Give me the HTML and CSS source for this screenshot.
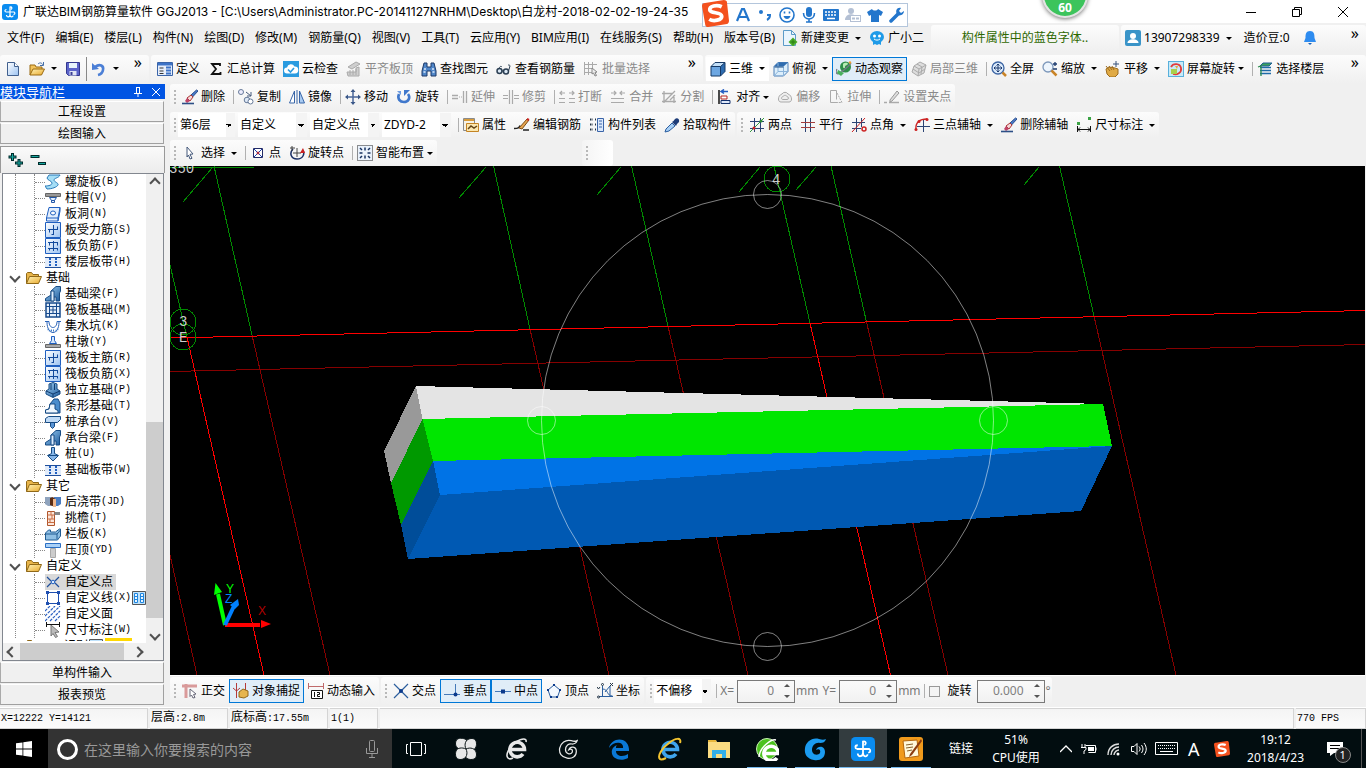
FILE: index.html
```html
<!DOCTYPE html>
<html lang="zh-CN">
<head>
<meta charset="UTF-8">
<meta name="viewport" content="width=device-width,initial-scale=1.0">
<title>广联达BIM钢筋算量软件 GGJ2013</title>
<link rel="stylesheet" href="styles.css">
</head>
<body>

<!-- icon library -->
<svg class="defs" aria-hidden="true">
  <linearGradient id="gBlue" x1="0" y1="0" x2="1" y2="1"><stop offset="0" stop-color="#fff"/><stop offset="1" stop-color="#9cc3f2"/></linearGradient>
  <linearGradient id="gFold" x1="0" y1="0" x2="1" y2="1"><stop offset="0" stop-color="#fff3b8"/><stop offset="1" stop-color="#e9a92c"/></linearGradient>
  <linearGradient id="gBeam" x1="0" y1="0" x2="1" y2="1"><stop offset="0" stop-color="#9fd0f4"/><stop offset="1" stop-color="#1c5a9c"/></linearGradient>
  <symbol id="app" viewBox="0 0 16 16"><rect width="16" height="16" rx="3" fill="#0a8cf0"/><path d="M8 2.500v8.500M4 8h8.500M8 3c2-.5 2.500 1.500 1 2.500M4 8c-1.500-.5-1.500-2.500.5-2.500M12 8c1 .5 1.500 2-.5 2.500M8 10.500c0 3-3.500 3-3.500.5M8 10.500c0 3 3 3 3 1" fill="none" stroke="#fff" stroke-width="1.200"/></symbol>
  <symbol id="new" viewBox="0 0 16 16"><path d="M2.500 1.500h7l4 4v9h-11z" fill="url(#gBlue)" stroke="#41608e"/><path d="M9.500 1.500v4h4" fill="#fff" stroke="#41608e"/></symbol>
  <symbol id="open" viewBox="0 0 16 16"><path d="M1 14V4h5l1 2h6v3" fill="#f2c35b" stroke="#9a6a12"/><path d="M1 14l3-6h11.500l-3 6z" fill="url(#gFold)" stroke="#9a6a12"/><path d="M9 3c2-2 4-1 5 1M14.500 1v3.500H11" fill="none" stroke="#466fa8"/></symbol>
  <symbol id="save" viewBox="0 0 16 16"><path d="M1.500 1.500h13v13h-11l-2-2z" fill="#5b63c9" stroke="#32378e"/><path d="M4 2h8v5H4z" fill="#e8f4fb"/><path d="M4.500 10h7v4.500h-7z" fill="#dfe4f4"/><path d="M5.500 11h2v3h-2z" fill="#3b3f96"/></symbol>
  <symbol id="undo" viewBox="0 0 16 16"><path d="M4 6c5-4 9-1 8 3-.5 3-3 4.500-5 5" fill="none" stroke="#4b7fd6" stroke-width="2.600"/><path d="M1 2v7l7-1z" fill="#4b7fd6"/></symbol>
  <symbol id="define" viewBox="0 0 16 16"><path d="M.5 1.500h15v13H.5z" fill="#e6eefb" stroke="#3a64a8"/><path d="M1 2h14v2.500H1z" fill="#3d73c7"/><path d="M2.500 7h4M2.500 10h4M2.500 12.500h4" stroke="#333"/><path d="M9 6.500h5M9 9.500h5M9 12.500h5" stroke="#3d73c7" stroke-width="2"/></symbol>
  <symbol id="sum" viewBox="0 0 16 16"><path d="M12 5V3H4l4 5-4 5h8.500v-2" fill="none" stroke="#111" stroke-width="1.800"/></symbol>
  <symbol id="cloud" viewBox="0 0 16 16"><rect width="16" height="16" fill="#2a9be0"/><path d="M4 12.500a3 3 0 0 1 0-6 4 4 0 0 1 7.500-1A3.500 3.500 0 0 1 12 12.500z" fill="#fff"/><path d="M5 8.500l2.500 2.500L11 7" fill="none" stroke="#2a9be0" stroke-width="1.600"/></symbol>
  <symbol id="slabtop" viewBox="0 0 16 16"><path d="M2 6l8-5 4 2-8 5zM1 11h9V7l3-1v9H2z" fill="#cfcfcf" stroke="#aaa"/><path d="M4 9v5M7 9v5M10 8v6" stroke="#aaa"/></symbol>
  <symbol id="find" viewBox="0 0 16 16"><path d="M3 2h3v4h4V2h3l2 8v5h-5v-5H6v5H1v-5z" fill="#4f86c8" stroke="#1c3968"/><path d="M3 8h2M11 8h2M2.500 11h2M11.500 11h2" stroke="#dbe9fa" stroke-width="1.500"/></symbol>
  <symbol id="glasses" viewBox="0 0 16 16"><circle cx="3.500" cy="10" r="2.500" fill="#dce9f5" stroke="#2b3e52" stroke-width="1.500"/><circle cx="10" cy="10.500" r="2.500" fill="#dce9f5" stroke="#2b3e52" stroke-width="1.500"/><path d="M6 10h2M3 7.500C4 5 5 5 6 6M12.500 10L14 5c0-1-1-1-2-1" fill="none" stroke="#2b3e52"/></symbol>
  <symbol id="batch" viewBox="0 0 16 16"><path d="M1.500 1v13M5.500 1v13M9.500 1v6M1 3.500h13M1 7.500h9M1 11.500h8" stroke="#aaa" fill="none"/><path d="M9 7l5 4-2 .5 1.500 3-1.500.5-1.500-3L9 13z" fill="#eee" stroke="#888"/></symbol>
  <symbol id="cube" viewBox="0 0 16 16"><path d="M1 5.500h9.500V15H1z" fill="#6da7e2"/><path d="M1 5.500L5 1.500h10L10.500 5.500z" fill="#c4e0f8"/><path d="M15 1.500v9L10.500 15V5.500z" fill="#2e6cb0"/><path d="M1 5.500h9.500V15H1zM1 5.500l4-4h10v9L10.500 15M15 1.500l-4.500 4" fill="none" stroke="#173a66"/></symbol>
  <symbol id="cube2" viewBox="0 0 16 16"><path d="M1 5.500L5 1.500h10v9L10.500 15H1z" fill="#dceefb" stroke="#4a7fb8"/><path d="M1 5.500l4-4h10l-4.500 4z" fill="#2e6cb0"/><path d="M10.500 5.500V15M5 1.500v9L1 15M5 10.500h10" fill="none" stroke="#8ab3da"/><path d="M1.500 6h9" stroke="#174b86"/></symbol>
  <symbol id="orbit" viewBox="0 0 16 16"><circle cx="9.500" cy="6" r="5.500" fill="#2f8f4a"/><path d="M7 3c2-2 5-1 5 0s-3 1-3 3-2 1-2 0z" fill="#b8ecb4"/><path d="M1 8c-2 4 0 6 3 4S14 4 15 2" fill="none" stroke="#778" stroke-width="1.200"/><path d="M2 9l6 3-3 3-4-3z" fill="#49b15d"/><circle cx="14" cy="1.500" r="1.200" fill="#f0a030"/></symbol>
  <symbol id="part3d" viewBox="0 0 16 16"><path d="M3 5l6-4 6 3-2 8-6 3-6-4z" fill="#ddd" stroke="#aaa"/><path d="M3 5l5 3 7-4M8 8l-1 7M6 3l5 3-1 7M2 8l6 4 6-4" fill="none" stroke="#aaa"/></symbol>
  <symbol id="fullscr" viewBox="0 0 16 16"><circle cx="7" cy="7" r="6" fill="#dcebfb" stroke="#3e66a4" stroke-width="1.300"/><path d="M11.500 11.500l3.500 3.500" stroke="#c98428" stroke-width="2.500"/><path d="M7 3v8M3 7h8M5.500 4.500L7 3l1.500 1.500M5.500 9.500L7 11l1.500-1.500M4.500 5.500L3 7l1.500 1.500M9.500 5.500L11 7 9.500 8.500" fill="none" stroke="#1d3b6e"/></symbol>
  <symbol id="zoomi" viewBox="0 0 16 16"><circle cx="6" cy="6" r="5" fill="#edf5fd" stroke="#7d98bb" stroke-width="1.300"/><path d="M9.500 9.500l5 5" stroke="#c98428" stroke-width="2.500"/><path d="M13 1v4M11 3h4M11 8h4" stroke="#1d3b6e" stroke-width="1.300"/></symbol>
  <symbol id="pan" viewBox="0 0 16 16"><path d="M1 8l3-2 6 1 3 1v5l-3 3H5l-3-3z" fill="#e0aa45" stroke="#9c6c20"/><path d="M1 5l4 5M4 5l3 4M7 5l2 4" stroke="#9c6c20"/><path d="M11 0v6M8 3h6" stroke="#34507a"/></symbol>
  <symbol id="scrrot" viewBox="0 0 16 16"><rect x=".5" y=".5" width="15" height="15" fill="#c8eaf8" stroke="#58b0dc"/><path d="M3 6c2-4 9-4 10 1s-4 7-8 6" fill="none" stroke="#e23b3b" stroke-width="1.800"/><path d="M3 8h6v5H3z" fill="#a9cf4c"/><path d="M7 5l2 3 1-3z" fill="#e8a33a"/></symbol>
  <symbol id="floors" viewBox="0 0 16 16"><path d="M3 5l3-3h9l-3 3z" fill="#3aa05c" stroke="#1e5f96"/><path d="M3 6.500h11M3 9.500h11M3 12.500h11" stroke="#1e6aa8" stroke-width="1.600"/><path d="M1 6l3-1v10" fill="none" stroke="#2b8a4f" stroke-width="1.300"/></symbol>
  <symbol id="brush" viewBox="0 0 16 16"><path d="M14.500 1L9 6l1.500 2L16 2z" fill="#4a7ac8" stroke="#2b4f8e"/><path d="M9 6L5 9l3 3 3-4z" fill="#f3d8d8" stroke="#a33"/><path d="M5 9l-2 3 2 2 3-2z" fill="#c04468"/><path d="M0 14.500h12" stroke="#2c4f86" stroke-width="1.600"/></symbol>
  <symbol id="copy" viewBox="0 0 16 16"><circle cx="3" cy="3" r="2.500" fill="#eef" stroke="#667a99"/><circle cx="9" cy="11" r="2.800" fill="#dde8f6" stroke="#667a99"/><circle cx="12.500" cy="12.500" r="2.500" fill="#fff" stroke="#667a99"/><path d="M8 3l5 4M13 3v4H9" fill="none" stroke="#44587a"/></symbol>
  <symbol id="mirror" viewBox="0 0 16 16"><path d="M5.500 2v12H.5z" fill="#fff" stroke="#3866a8"/><path d="M10.500 2v12h5z" fill="#a9cbf2" stroke="#3866a8"/><path d="M8 1v14" stroke="#3866a8"/></symbol>
  <symbol id="move" viewBox="0 0 16 16"><path d="M8 2v12M2 8h12" stroke="#4a679a" stroke-width="1.500"/><path d="M8 0l2.500 3h-5zM8 16l2.500-3h-5zM0 8l3-2.500v5zM16 8l-3-2.500v5z" fill="#3a5788"/></symbol>
  <symbol id="rot" viewBox="0 0 16 16"><path d="M3 5c-2 5 1 8 5 8s7-4 4-8" fill="none" stroke="#4078cc" stroke-width="2.600"/><path d="M8 7V1h6z" fill="#4078cc"/><path d="M1 2h4v4z" fill="#6f9ce0"/></symbol>
  <symbol id="extend" viewBox="0 0 16 16"><path d="M0 6.500h6M0 9.500h6M11.500 2v12M14.500 2v12" stroke="#aaa" stroke-width="1.300"/><path d="M7 8h4" stroke="#aaa" stroke-dasharray="1 1"/></symbol>
  <symbol id="trim" viewBox="0 0 16 16"><path d="M0 6.500h5M0 9.500h5M6.500 1v14M9.500 1v14M11 6.500h5M11 9.500h5" stroke="#aaa" stroke-width="1.200"/></symbol>
  <symbol id="breaki" viewBox="0 0 16 16"><path d="M0 9.500h6M10 9.500h6M0 13.500h6M10 13.500h6M1 4h5M10 4h5M3 2L1 4l2 2M13 2l2 2-2 2" fill="none" stroke="#aaa" stroke-width="1.200"/></symbol>
  <symbol id="merge" viewBox="0 0 16 16"><path d="M1 9.500h13M1 13.500h13M1 4h5M10 4h5M4 2l2 2-2 2M12 2l-2 2 2 2" fill="none" stroke="#aaa" stroke-width="1.200"/></symbol>
  <symbol id="split" viewBox="0 0 16 16"><path d="M1 4.500h11M1 12.500h14M3 2v12M13 6v8M4 12L14 2M9 11l5-5" fill="none" stroke="#aaa" stroke-width="1.300"/></symbol>
  <symbol id="align" viewBox="0 0 16 16"><path d="M2 1v14" stroke="#111" stroke-width="1.500"/><path d="M4 2.500h7M7 .5l-3 2 3 2" fill="none" stroke="#235cc2" stroke-width="1.500"/><path d="M4 7h6v3H4z" fill="#fff" stroke="#b3231f"/><path d="M4 11.500h9v3H4z" fill="#dfe9fa" stroke="#12306c"/></symbol>
  <symbol id="offset" viewBox="0 0 16 16"><path d="M5 5a3.500 3.500 0 0 1 6 0c4 1 5 8 1 8H4C0 13 1 6 5 5z" fill="#eee" stroke="#aaa"/><path d="M6 7.500c2-2 3-1 4 0 2 .5 2 3 0 3H6c-2 0-2-2.500 0-3z" fill="none" stroke="#aaa"/></symbol>
  <symbol id="stretch" viewBox="0 0 16 16"><path d="M2.500 1.500h6v9M2.500 1.500v12h7" fill="none" stroke="#aaa"/><path d="M9 4l5 9.500H9" fill="none" stroke="#aaa" stroke-dasharray="2 1"/></symbol>
  <symbol id="grip" viewBox="0 0 16 16"><path d="M0 13.500h3M5 13.500h10" stroke="#aaa" stroke-width="1.500"/><path d="M6 11l7-9 2 2-7 8-2 1z" fill="#ddd" stroke="#999"/></symbol>
  <symbol id="prop" viewBox="0 0 16 16"><path d="M.5 1.500h11v12H.5z" fill="#f6f2e6" stroke="#8a8a8a"/><path d="M1 2h10v2H1z" fill="#d89c3a"/><path d="M3.500 6.500h12v8h-12z" fill="#fbe7b0" stroke="#c48424"/><path d="M5 12l3-3 3 2 3-2" fill="none" stroke="#644516" stroke-width="1.500"/></symbol>
  <symbol id="editbar" viewBox="0 0 16 16"><path d="M0 11.500c5 0 5-1 6-3M9 13h6" fill="none" stroke="#222" stroke-width="1.500"/><path d="M5 11l8-9 2 1-7 9z" fill="#e6a550" stroke="#7d4b13"/><path d="M13 2l2 1" stroke="#c22" stroke-width="2"/></symbol>
  <symbol id="list" viewBox="0 0 16 16"><path d="M1 2.500h3M1 7.500h3M1 12.500h3M6 2.500h1M6 7.500h1M6 12.500h1" stroke="#234" stroke-width="2" stroke-dasharray="1.500 1"/><path d="M8.500 1.500h6v13h-6z" fill="#dbe8fb" stroke="#3a64a8"/><path d="M10 4h3M10 7h3M10 10h3" stroke="#3a64a8"/></symbol>
  <symbol id="picker" viewBox="0 0 16 16"><path d="M1 15l1-3 6-6 3 3-6 5z" fill="#a8cff5" stroke="#2b5ea0"/><path d="M8 5l4 4 1-2 2-2c1-3-2-5-4-3L9.500 4z" fill="#1d3c78"/></symbol>
  <symbol id="ax2" viewBox="0 0 16 16"><path d="M5.500 1v14M11.500 1v14M1 4.500h14M1 11.500h14" stroke="#2c4474"/><path d="M1 15L15 1" stroke="#349a3c"/><circle cx="5" cy="11" r="1.500" fill="#c22"/><circle cx="12" cy="4" r="1.500" fill="#2a8b34"/></symbol>
  <symbol id="axp" viewBox="0 0 16 16"><path d="M5.500 1v14M10.500 1v14" stroke="#2c4474"/><path d="M1 5.500h14M1 10.500h14" stroke="#a33d3d"/></symbol>
  <symbol id="axa" viewBox="0 0 16 16"><path d="M5.500 1v14M10.500 1v9M1 5.500h13M1 11.500h9" stroke="#2c4474"/><path d="M1 15L14 1" stroke="#c22"/><circle cx="13" cy="12" r="2" fill="none" stroke="#c22" stroke-width="1.500"/></symbol>
  <symbol id="ax3" viewBox="0 0 16 16"><path d="M9.500 2v13M3 9.500h13" stroke="#2c4474"/><path d="M2 13C1 5 6 2 13 2" fill="none" stroke="#c22" stroke-width="1.400"/><circle cx="2" cy="12.500" r="1.500" fill="#c22"/><circle cx="5" cy="4.500" r="1.500" fill="#c22"/><circle cx="13" cy="2.500" r="1.500" fill="#c22"/></symbol>
  <symbol id="dim" viewBox="0 0 16 16"><path d="M1.500 9v6M14.500 9v6M2 12.500h12M4 10.500l-2 2 2 2M12 10.500l2 2-2 2" fill="none" stroke="#111"/><path d="M1 5h3v3H1zM12 0h3v3h-3z" fill="#3ba345"/></symbol>
  <symbol id="cursor" viewBox="0 0 16 16"><path d="M5 2l6 7-3 .3 2 4-2 .7-1.500-4L5 12z" fill="#fff" stroke="#44587a"/></symbol>
  <symbol id="pt" viewBox="0 0 16 16"><path d="M3.500 3.500h9v9h-9z" fill="#fff" stroke="#222a66"/><path d="M4 4l8 8M12 4l-8 8" stroke="#1f3fa8"/><path d="M8 6.500v3M6.500 8h3" stroke="#c22"/></symbol>
  <symbol id="rotpt" viewBox="0 0 16 16"><path d="M4 4c-4 4-2 10 4 10s8-5 6-9" fill="none" stroke="#1a2f66" stroke-width="1.500"/><path d="M8 3v9M4 8h8M1 3h5M3 1v5" stroke="#444"/><path d="M11 8h5l-2-5z" fill="#c22"/></symbol>
  <symbol id="smart" viewBox="0 0 16 16"><path d="M.5.5h15v15H.5z" fill="#eaf2fc" stroke="#222" stroke-dasharray="1 1"/><path d="M8 2.500v3M8 10.500v3M2.500 8h3M10.500 8h3M3 3l2 2M13 3l-2 2M3 13l2-2M13 13l-2-2" stroke="#16305f" stroke-width="1.500"/></symbol>
  <!-- tree -->
  <symbol id="folder" viewBox="0 0 16 16"><path d="M.5 13.500v-10l1-1h4l1.500 2h5.500v2" fill="#e8b54a" stroke="#8f6818"/><path d="M.5 13.500l3-7h12l-3 7z" fill="url(#gFold)" stroke="#8f6818"/></symbol>
  <symbol id="spiral" viewBox="0 0 16 16"><path d="M4 1h11c-1 3-6 3-6 5s5 3 4 5-6 4-11 4l-2-3c4 0 7-1 7-3S2 6 2 4z" fill="#a5def6" stroke="#2879b8"/></symbol>
  <symbol id="cap" viewBox="0 0 16 16"><path d="M.5 3.500h15v3H.5z" fill="#999" stroke="#666"/><path d="M4.500 7.500h7l-2 3h-3zM6.500 10.500h3v2h-3z" fill="#e4f0ff" stroke="#2458a8"/></symbol>
  <symbol id="hole" viewBox="0 0 16 16"><path d="M4 1.500h11L13 12H1.500zM1.500 12v3H13V12M15 1.500V5l-2 10" fill="#e2eefd" stroke="#1f5fc0"/><ellipse cx="8" cy="7" rx="2.500" ry="2" fill="#fff" stroke="#1f5fc0"/></symbol>
  <symbol id="rebar" viewBox="0 0 16 16"><path d="M.5.5h15v15H.5z" fill="url(#gBlue)" stroke="#1f5fc0"/><path d="M8.500 3v10M3 7.500h10M4.500 7.500v3M12.500 7.500v-3M8.500 12.500h-2" fill="none" stroke="#124a9c"/></symbol>
  <symbol id="rebar2" viewBox="0 0 16 16"><path d="M.5.5h15v15H.5z" fill="url(#gBlue)" stroke="#1f5fc0"/><path d="M3 4.500h10M3 10.500h10M4.500 4.500v3M8.500 3v10M12.500 4.500v3M4.500 10.500v2M12.500 10.500v2" fill="none" stroke="#124a9c"/></symbol>
  <symbol id="strip" viewBox="0 0 16 16"><path d="M0 3h16v11H0z" fill="#e2ecfa"/><path d="M0 3.500h16M0 13.500h16" stroke="#1f4f9c"/><path d="M5 4v9M11 4v9" stroke="#1f5fc0" stroke-width="2" stroke-dasharray="2 1"/></symbol>
  <symbol id="beam" viewBox="0 0 16 16"><path d="M6 5l5-4.500h4.500V5l-1 2v8H11v-4H9v4H.5v-2.500L6 9z" fill="url(#gBeam)" stroke="#164b84"/><path d="M6 5h3v10H6z" fill="#def" stroke="#164b84"/></symbol>
  <symbol id="raft" viewBox="0 0 16 16"><path d="M1 1h14v14H1z" fill="#e6f0fb" stroke="#16498c" stroke-width="1.500"/><path d="M4.500 1v14M11.500 1v14M1 4.500h14M1 11.500h14M8 5v6M5 8h6" stroke="#16498c"/></symbol>
  <symbol id="pit" viewBox="0 0 16 16"><path d="M0 3.500h4c0 8 8 8 8 0h4M2 4c0 14 12 14 12 0" fill="none" stroke="#2a63b8"/><path d="M3 11l2 2M6 12.500h4M11 13l2-2" stroke="#3e7bc8" stroke-dasharray="1 1" stroke-width="2"/></symbol>
  <symbol id="pier" viewBox="0 0 16 16"><path d="M6.500 2.500h3v4l2 3h-7l2-3z" fill="#d8e7fa" stroke="#1f5fc0"/><path d="M.5 10.500h15v3H.5z" fill="#aaa" stroke="#666"/></symbol>
  <symbol id="found" viewBox="0 0 16 16"><path d="M1 9l3-2V2l4-1.500L12 2v5l3 2v3l-7 3.500L1 12z" fill="url(#gBeam)" stroke="#164b84"/><path d="M1 9l7 3 7-3M8 12v3M6 2v6M9.500 2v6" fill="none" stroke="#123c6e"/></symbol>
  <symbol id="stripf" viewBox="0 0 16 16"><path d="M5 6l4-5h4l2 4v10H.5V12L4 11z" fill="#4a8ccc" stroke="#164b84"/><path d="M5 6h5v5l3 1.500V15H.5v-3L4 11z" fill="#eef6fe" stroke="#164b84"/></symbol>
  <symbol id="pcap" viewBox="0 0 16 16"><path d="M.5 4.500l3-2h12v3l-3 3H.5z" fill="#bfdaf6" stroke="#164b84"/><path d="M5.500 8.500h4v4l-2 2-2-2z" fill="#5793d4" stroke="#164b84"/></symbol>
  <symbol id="pile" viewBox="0 0 16 16"><path d="M6.500 1.500h3v6l4 2-5.500 5.500L2.500 9.500l4-2z" fill="#86b7ea" stroke="#164b84"/><path d="M3 9.500h10" stroke="#164b84"/></symbol>
  <symbol id="post" viewBox="0 0 16 16"><path d="M0 3h7v9H3L0 10z" fill="#8fa3bd"/><path d="M9 3h7v7l-3 2H9z" fill="#4a7cc0"/><path d="M5 4l3-1 2 2v8L5 11z" fill="#5c2c12"/><path d="M8 5h3v8H8z" fill="#f0b78c"/></symbol>
  <symbol id="eave" viewBox="0 0 16 16"><path d="M2.500 1.500h7v14h-7z" fill="#fbe6da" stroke="#b0562c"/><path d="M2.500 5h7M2.500 9h7M2.500 12.500h7M6 1.500V5M5 9v3M7 5v4" stroke="#c96d42"/><path d="M9.500 2H15v3H9.500z" fill="#888"/></symbol>
  <symbol id="rail" viewBox="0 0 16 16"><path d="M.5 7l3-3h2v2h5l4-3h1v7l-3 4H.5z" fill="#8fbfe4" stroke="#1e5b92"/><path d="M.5 8H12v5M12 8l3.500-4" fill="none" stroke="#1e5b92"/></symbol>
  <symbol id="coping" viewBox="0 0 16 16"><path d="M5.500 6.500h5v9h-5z" fill="#ccc" stroke="#aaa"/><path d="M.5 1.500h15v4H.5z" fill="#a9d0f6" stroke="#2a6fc4"/></symbol>
  <symbol id="cpt" viewBox="0 0 16 16"><path d="M2 3l4 4M14 3l-4 4M2 13l4-4M14 13l-4-4" stroke="#1f4f9c" stroke-width="1.200"/><circle cx="8" cy="8" r="1.800" fill="#dcecff" stroke="#1f5fc0"/></symbol>
  <symbol id="cline" viewBox="0 0 16 16"><path d="M2.500 2.500h11v11h-11z" fill="#fff" stroke="#1f4fb0"/><path d="M1 1h3v3H1zM12 1h3v3h-3zM1 12h3v3H1zM12 12h3v3h-3z" fill="#1f4fb0"/></symbol>
  <symbol id="cface" viewBox="0 0 16 16"><path d="M0 5l5-5M0 10L10 0M0 15L15 0M5 15L15 5M10 15l5-5" stroke="#2a5fc0" stroke-width="1.200" stroke-dasharray="3 1"/></symbol>
  <symbol id="dimcur" viewBox="0 0 16 16"><path d="M1.500 0v5M14.500 0v5M1 2.500h14" stroke="#111"/><path d="M6 3l8 7-4 .5 2.500 4-2 1L8 11.500 6 14z" fill="#bbb" stroke="#777"/></symbol>
  <symbol id="book" viewBox="0 0 14 14"><path d="M.5.5h13v13H.5z" fill="#bfe2fb" stroke="#555"/><path d="M2.500 2.500h3v9h-3zM8.500 2.500h3v9h-3z" fill="#e8f5ff" stroke="#1f86e0"/><path d="M3 5.500h2M3 8.500h2M9 5.500h2M9 8.500h2" stroke="#1f86e0"/></symbol>
  <!-- snap bar -->
  <symbol id="ortho" viewBox="0 0 16 16"><path d="M0 3h15M4 1v14" stroke="#d99a9a" stroke-width="3"/><path d="M8 6l6 5-2.500.5 1.500 3-2 .5-1.500-3L8 13.500z" fill="#fff" stroke="#667"/></symbol>
  <symbol id="osnap" viewBox="0 0 16 16"><path d="M3.500 0v15M12.500 0v8M0 5l3.500 3L7 5" fill="none" stroke="#b43a3a"/><path d="M6 9l4-3 5 2v5l-4 2-5-1z" fill="#e6b54e" stroke="#94691b"/></symbol>
  <symbol id="dynin" viewBox="0 0 16 16"><path d="M0 3.500h16M.5 0v6M15.500 0v6" stroke="#c06a6a"/><path d="M3.500 7.500h11v8h-11z" fill="#fff" stroke="#111"/><path d="M6.500 9v5M9 9.500h2.500v2H9.500v2H12" fill="none" stroke="#111"/></symbol>
  <symbol id="cross" viewBox="0 0 16 16"><path d="M1 1l14 14M15 1L1 15" stroke="#2d5f9e" stroke-width="1.200"/><circle cx="8" cy="8" r="2" fill="#0c3a8c"/></symbol>
  <symbol id="perp" viewBox="0 0 16 16"><path d="M11.500 1v10M0 11.500h16" stroke="#4579b8"/><circle cx="11.500" cy="11.500" r="2" fill="#0c3a8c"/></symbol>
  <symbol id="mid" viewBox="0 0 16 16"><path d="M0 8.500h16" stroke="#4579b8"/><path d="M6 6.500h4v4H6z" fill="#0c3a8c"/></symbol>
  <symbol id="vertex" viewBox="0 0 16 16"><path d="M8 2l6 5-2.500 7h-7L2 7z" fill="#f4f9ff" stroke="#2d5f9e"/><path d="M7 1h2v2H7zM1 6h2v2H1zM13 6h2v2h-2zM4 13h2v2H4zM10 13h2v2h-2z" fill="#0c3a8c"/></symbol>
  <symbol id="coord" viewBox="0 0 16 16"><path d="M5.500 3v11M5.500 6c6 0 4 7 10 7M8 9l5-6v10M2 13.500h14" fill="none" stroke="#2d5f9e"/><circle cx="5.500" cy="1.500" r="1" fill="none" stroke="#234"/><circle cx="1.500" cy="14" r="1" fill="none" stroke="#234"/><path d="M0 4l1.500 2L3 4M13 0l3 3M16 0l-3 3" fill="none" stroke="#234"/></symbol>
  <!-- menu bar -->
  <symbol id="newchg" viewBox="0 0 16 16"><path d="M1.500.5h8l4 4v11h-12z" fill="#eaf5fd" stroke="#5b9bc8"/><path d="M9.500.5v4h4" fill="none" stroke="#5b9bc8"/><path d="M11 7.500l4.500 4.500-4.500 4.500L6.500 12z" fill="#4caf2a"/><path d="M11 9.500v5M8.500 12h5" stroke="#2a7d14"/></symbol>
  <symbol id="robot" viewBox="0 0 16 16"><ellipse cx="8" cy="7" rx="7" ry="6" fill="#1f9be8"/><path d="M4 11h8v4l-2-1-2 1-2-1-2 1z" fill="#1f9be8"/><circle cx="5.500" cy="6" r="1.500" fill="#fff"/><circle cx="10.500" cy="6" r="1.500" fill="#fff"/><path d="M5 9c2 1.500 4 1.500 6 0" fill="none" stroke="#fff"/></symbol>
  <symbol id="user" viewBox="0 0 16 16"><rect width="16" height="16" rx="2" fill="#3a94c8"/><circle cx="8" cy="6" r="3" fill="#fff"/><path d="M2.500 13c0-5 11-5 11 0z" fill="#fff"/></symbol>
  <symbol id="bell" viewBox="0 0 16 16"><path d="M8 1c4 0 4.500 3 4.500 7l1.500 4H2l1.500-4C3.500 4 4 1 8 1z" fill="#2e8cf0"/><path d="M6 13h4l-2 2z" fill="#1b62b8"/></symbol>
  <!-- taskbar -->
  <symbol id="win" viewBox="0 0 16 16"><path d="M0 2.300L6.500 1.400V7.600H0zM7.300 1.300L16 0v7.600H7.300zM0 8.400h6.500v6.200L0 13.700zM7.300 8.400H16V16l-8.700-1.300z" fill="#fff"/></symbol>
  <symbol id="ie" viewBox="0 0 24 24"><path d="M5 12.500h14.500A7.300 7.300 0 1 0 18 17" fill="none" stroke="currentColor" stroke-width="3.600"/></symbol>
  <symbol id="swirl" viewBox="0 0 24 24"><path d="M23 2c-1 3-3 4-6 4-4-1-8 2-8 7s6 6 8 3c1-3-1-5-4-3 2-5 9-4 9 2s-5 9-11 8C4 22 1 17 2 11S9 0 16 2c3 1 5 1 7 0z" fill="none" stroke="currentColor" stroke-width="1.500"/></symbol>
  <symbol id="sogou" viewBox="0 0 26 26"><path d="M3 3l18-3c2 0 3 1 3 2l2 18c0 2-1 3-2 3L6 26c-2 0-3-1-3-3L0 6c0-2 1-3 3-3z" fill="#f4511e"/><path d="M19 6.500C14 4 7 6 7.500 9.500c.5 4 11 1.500 11.500 6 .3 4-8 5.500-12 3" fill="none" stroke="#fff" stroke-width="3.600"/></symbol>
</svg>

<header class="title">
  <svg class="ic"><use href="#app"/></svg>
  <h1>广联达BIM钢筋算量软件 GGJ2013 - [C:\Users\Administrator.PC-20141127NRHM\Desktop\白龙村-2018-02-02-19-24-35</h1>
  <div class="win-btns">
    <button aria-label="最小化"><svg class="ic10" viewBox="0 0 10 10"><path d="M0 5.500h10" stroke="#000"/></svg></button>
    <button aria-label="还原"><svg class="ic10" viewBox="0 0 10 10"><path d="M.5 2.500h7v7h-7zM2.500 2.500v-2h7v7h-2" fill="none" stroke="#000"/></svg></button>
    <button aria-label="关闭"><svg class="ic10" viewBox="0 0 10 10"><path d="M0 0l10 10M10 0L0 10" stroke="#000"/></svg></button>
  </div>
</header>

<div class="ball">60</div>
<div class="ime">
  <svg class="ime-logo"><use href="#sogou"/></svg>
  <svg viewBox="0 0 16 16"><path d="M2 14L7 2h2l5 12M4.500 10h7" fill="none" stroke="#2376cc" stroke-width="2.200"/></svg>
  <svg viewBox="0 0 16 16"><circle cx="4" cy="5" r="2" fill="#2376cc"/><path d="M10 8h3c0 3-1 4-3 5" fill="none" stroke="#2376cc" stroke-width="2"/></svg>
  <svg viewBox="0 0 16 16"><circle cx="8" cy="8" r="7" fill="none" stroke="#2376cc" stroke-width="1.600"/><path d="M4.500 9c1 4 6 4 7 0z" fill="#2376cc"/><path d="M5.500 4.500v2M10.500 4.500v2" stroke="#2376cc" stroke-width="1.600"/></svg>
  <svg viewBox="0 0 16 16"><rect x="5" y="0" width="6" height="10" rx="3" fill="#2376cc"/><path d="M2.500 6c0 8 11 8 11 0M8 12v3M5 15h6" fill="none" stroke="#2376cc" stroke-width="1.600"/></svg>
  <svg viewBox="0 0 16 16"><rect x="0" y="2" width="16" height="12" rx="1" fill="#2376cc"/><path d="M2 5h12M2 8h12" stroke="#fff" stroke-width="1.500" stroke-dasharray="2 1"/><path d="M4 11.500h8" stroke="#fff" stroke-width="1.500"/></svg>
  <svg viewBox="0 0 16 16"><circle cx="6" cy="4" r="3" fill="#b4c0d4"/><path d="M0 13c0-7 10-7 11-3v3z" fill="#b4c0d4"/><rect x="5.500" y="8.500" width="10" height="6" fill="#fff" stroke="#b4c0d4"/><path d="M7 11.500h3M11 11.500h3" stroke="#b4c0d4" stroke-width="2"/></svg>
  <svg viewBox="0 0 16 16"><path d="M5 2c1 2 5 2 6 0l5 3-2 4-2-1v7H4V8L2 9 0 5z" fill="#2376cc"/></svg>
  <svg viewBox="0 0 16 16"><path d="M2 14l7-7" stroke="#2376cc" stroke-width="3.500" stroke-linecap="round"/><path d="M15 4l-3 2-2-2 2-3C8 0 6 4 8 7s7 1 7-3z" fill="#2376cc"/></svg>
</div>

<nav class="menubar">
  <div class="menus">
    <a href="#">文件(F)</a><a href="#">编辑(E)</a><a href="#">楼层(L)</a><a href="#">构件(N)</a><a href="#">绘图(D)</a><a href="#">修改(M)</a><a href="#">钢筋量(Q)</a><a href="#">视图(V)</a><a href="#">工具(T)</a><a href="#">云应用(Y)</a><a href="#">BIM应用(I)</a><a href="#">在线服务(S)</a><a href="#">帮助(H)</a><a href="#">版本号(B)</a>
  </div>
  <button><svg class="ic"><use href="#newchg"/></svg>新建变更<i class="arr far"></i></button>
  <button><svg class="ic"><use href="#robot"/></svg>广小二</button>
  <div class="band notice">构件属性中的蓝色字体..</div>
  <div class="band account">
    <button><svg class="ic"><use href="#user"/></svg>13907298339<i class="arr far"></i></button>
    <button>造价豆:0</button>
    <button aria-label="通知"><svg class="ic"><use href="#bell"/></svg></button>
    <span class="more">»</span>
  </div>
</nav>

<div class="toolrow">
  <div class="band file">
    <button aria-label="新建"><svg class="ic"><use href="#new"/></svg></button>
    <button aria-label="打开"><svg class="ic"><use href="#open"/></svg><i class="arr far"></i></button>
    <button aria-label="保存"><svg class="ic"><use href="#save"/></svg></button>
    <i class="sep tall"></i>
    <button aria-label="撤销"><svg class="ic"><use href="#undo"/></svg><i class="arr far"></i></button>
    <span class="more">»</span>
  </div>
  <div class="band calc">
    <button><svg class="ic"><use href="#define"/></svg>定义</button>
    <button><svg class="ic"><use href="#sum"/></svg>汇总计算</button>
    <button><svg class="ic"><use href="#cloud"/></svg>云检查</button>
    <button disabled><svg class="ic"><use href="#slabtop"/></svg>平齐板顶</button>
    <button><svg class="ic"><use href="#find"/></svg>查找图元</button>
    <button><svg class="ic"><use href="#glasses"/></svg>查看钢筋量</button>
    <button disabled><svg class="ic"><use href="#batch"/></svg>批量选择</button>
    <span class="more">»</span>
  </div>
  <div class="band view">
    <button class="white"><svg class="ic"><use href="#cube"/></svg>三维<i class="arr far"></i></button>
    <button><svg class="ic"><use href="#cube2"/></svg>俯视<i class="arr far"></i></button>
    <button class="on"><svg class="ic"><use href="#orbit"/></svg>动态观察</button>
    <button disabled><svg class="ic"><use href="#part3d"/></svg>局部三维</button>
    <i class="sep"></i>
    <button><svg class="ic"><use href="#fullscr"/></svg>全屏</button>
    <button><svg class="ic"><use href="#zoomi"/></svg>缩放<i class="arr far"></i></button>
    <button><svg class="ic"><use href="#pan"/></svg>平移<i class="arr far"></i></button>
    <button><svg class="ic"><use href="#scrrot"/></svg>屏幕旋转<i class="arr"></i></button>
    <i class="sep"></i>
    <button><svg class="ic"><use href="#floors"/></svg>选择楼层</button>
    <span class="more">»</span>
  </div>
</div>

<main class="work">
  <aside class="side">
    <div class="side-head"><h2>模块导航栏</h2>
      <svg class="ic10" viewBox="0 0 10 10"><path d="M3.500 0v6M6.500 0v6M3 .5h4M1 6.500h8M5 6v4" stroke="#fff" fill="none"/></svg>
      <svg class="ic10" viewBox="0 0 10 10"><path d="M1 1l8 8M9 1L1 9" stroke="#fff"/></svg>
    </div>
    <button class="side-btn">工程设置</button>
    <button class="side-btn">绘图输入</button>
    <div class="side-tools">
      <svg viewBox="0 0 40 16"><path d="M5.500 1v8M1.500 5h8M12 7v8M8 11h8M23.500 4.500h9M31 11.500h8" stroke="#002b2b" stroke-width="3"/><path d="M5.500 2v6M2.500 5h6M12 8v6M9 11h6M24.500 4.500h7M32 11.500h6" stroke="#18a8a0"/></svg>
    </div>
    <div class="treebox">
      <div class="treeview">
        <ul class="tree">
          <li><ul>
            <li><a href="#"><svg class="ic"><use href="#spiral"/></svg>螺旋板<b>(B)</b></a></li>
            <li><a href="#"><svg class="ic"><use href="#cap"/></svg>柱帽<b>(V)</b></a></li>
            <li><a href="#"><svg class="ic"><use href="#hole"/></svg>板洞<b>(N)</b></a></li>
            <li><a href="#"><svg class="ic"><use href="#rebar"/></svg>板受力筋<b>(S)</b></a></li>
            <li><a href="#"><svg class="ic"><use href="#rebar2"/></svg>板负筋<b>(F)</b></a></li>
            <li><a href="#"><svg class="ic"><use href="#strip"/></svg>楼层板带<b>(H)</b></a></li>
          </ul></li>
          <li><div class="folder"><i class="chev"></i><svg class="ic"><use href="#folder"/></svg>基础</div><ul>
            <li><a href="#"><svg class="ic"><use href="#beam"/></svg>基础梁<b>(F)</b></a></li>
            <li><a href="#"><svg class="ic"><use href="#raft"/></svg>筏板基础<b>(M)</b></a></li>
            <li><a href="#"><svg class="ic"><use href="#pit"/></svg>集水坑<b>(K)</b></a></li>
            <li><a href="#"><svg class="ic"><use href="#pier"/></svg>柱墩<b>(Y)</b></a></li>
            <li><a href="#"><svg class="ic"><use href="#rebar"/></svg>筏板主筋<b>(R)</b></a></li>
            <li><a href="#"><svg class="ic"><use href="#rebar2"/></svg>筏板负筋<b>(X)</b></a></li>
            <li><a href="#"><svg class="ic"><use href="#found"/></svg>独立基础<b>(P)</b></a></li>
            <li><a href="#"><svg class="ic"><use href="#stripf"/></svg>条形基础<b>(T)</b></a></li>
            <li><a href="#"><svg class="ic"><use href="#pcap"/></svg>桩承台<b>(V)</b></a></li>
            <li><a href="#"><svg class="ic"><use href="#beam"/></svg>承台梁<b>(F)</b></a></li>
            <li><a href="#"><svg class="ic"><use href="#pile"/></svg>桩<b>(U)</b></a></li>
            <li><a href="#"><svg class="ic"><use href="#strip"/></svg>基础板带<b>(W)</b></a></li>
          </ul></li>
          <li><div class="folder"><i class="chev"></i><svg class="ic"><use href="#folder"/></svg>其它</div><ul>
            <li><a href="#"><svg class="ic"><use href="#post"/></svg>后浇带<b>(JD)</b></a></li>
            <li><a href="#"><svg class="ic"><use href="#eave"/></svg>挑檐<b>(T)</b></a></li>
            <li><a href="#"><svg class="ic"><use href="#rail"/></svg>栏板<b>(K)</b></a></li>
            <li><a href="#"><svg class="ic"><use href="#coping"/></svg>压顶<b>(YD)</b></a></li>
          </ul></li>
          <li><div class="folder"><i class="chev"></i><svg class="ic"><use href="#folder"/></svg>自定义</div><ul>
            <li><a href="#" class="sel"><svg class="ic"><use href="#cpt"/></svg>自定义点</a></li>
            <li><a href="#"><svg class="ic"><use href="#cline"/></svg>自定义线<b>(X)</b><svg class="ic14"><use href="#book"/></svg></a></li>
            <li><a href="#"><svg class="ic"><use href="#cface"/></svg>自定义面</a></li>
            <li><a href="#"><svg class="ic"><use href="#dimcur"/></svg>尺寸标注<b>(W)</b></a></li>
          </ul></li>
          <li><div class="folder"><i class="chev"></i><svg class="ic"><use href="#folder"/></svg><b>CAD</b>识别<svg class="ic14"><use href="#book"/></svg><em>NEW</em></div></li>
        </ul>
        <div class="vscroll"><i class="up"></i><i class="gap1"></i><i class="thumb"></i><i class="gap2"></i><i class="down"></i></div>
      </div>
      <div class="hscroll"><i class="left"></i><i class="thumb"></i><i class="right"></i></div>
    </div>
    <button class="side-btn">单构件输入</button>
    <button class="side-btn">报表预览</button>
  </aside>

  <section class="stage">
    <div class="line"><div class="band">
      <i class="dots"></i>
      <button><svg class="ic"><use href="#brush"/></svg>删除</button><i class="sep"></i>
      <button><svg class="ic"><use href="#copy"/></svg>复制</button>
      <button><svg class="ic"><use href="#mirror"/></svg>镜像</button><i class="sep"></i>
      <button><svg class="ic"><use href="#move"/></svg>移动</button>
      <button><svg class="ic"><use href="#rot"/></svg>旋转</button><i class="sep"></i>
      <button disabled><svg class="ic"><use href="#extend"/></svg>延伸</button>
      <button disabled><svg class="ic"><use href="#trim"/></svg>修剪</button><i class="sep"></i>
      <button disabled><svg class="ic"><use href="#breaki"/></svg>打断</button>
      <button disabled><svg class="ic"><use href="#merge"/></svg>合并</button>
      <button disabled><svg class="ic"><use href="#split"/></svg>分割</button><i class="sep"></i>
      <button><svg class="ic"><use href="#align"/></svg>对齐<i class="arr"></i></button>
      <button disabled><svg class="ic"><use href="#offset"/></svg>偏移</button>
      <button disabled><svg class="ic"><use href="#stretch"/></svg>拉伸</button><i class="sep"></i>
      <button disabled><svg class="ic"><use href="#grip"/></svg>设置夹点</button>
    </div></div>
    <div class="line"><div class="band">
      <i class="dots"></i>
      <select class="short" aria-label="楼层"><option>第6层</option></select>
      <select aria-label="构件类别"><option>自定义</option></select>
      <select aria-label="构件类型"><option>自定义点</option></select>
      <select aria-label="构件名称"><option>ZDYD-2</option></select>
      <i class="sep"></i>
      <button><svg class="ic"><use href="#prop"/></svg>属性</button>
      <button><svg class="ic"><use href="#editbar"/></svg>编辑钢筋</button>
      <button><svg class="ic"><use href="#list"/></svg>构件列表</button>
      <button><svg class="ic"><use href="#picker"/></svg>拾取构件</button>
    </div><div class="band">
      <i class="dots"></i>
      <button><svg class="ic"><use href="#ax2"/></svg>两点</button>
      <button><svg class="ic"><use href="#axp"/></svg>平行</button>
      <button><svg class="ic"><use href="#axa"/></svg>点角<i class="arr far"></i></button>
      <button><svg class="ic"><use href="#ax3"/></svg>三点辅轴<i class="arr far"></i></button>
      <button><svg class="ic"><use href="#brush"/></svg>删除辅轴</button>
      <button><svg class="ic"><use href="#dim"/></svg>尺寸标注<i class="arr far"></i></button>
    </div></div>
    <div class="line last"><div class="band">
      <i class="dots"></i>
      <button><svg class="ic"><use href="#cursor"/></svg>选择<i class="arr far"></i></button><i class="sep"></i>
      <button><svg class="ic"><use href="#pt"/></svg>点</button>
      <button><svg class="ic"><use href="#rotpt"/></svg>旋转点</button><i class="sep"></i>
      <button><svg class="ic"><use href="#smart"/></svg>智能布置<i class="arr"></i></button>
    </div><div class="band stub"><i class="dots"></i></div></div>

    <div class="canvas">
      <svg viewBox="170 166 1195 509" preserveAspectRatio="xMinYMin slice">
        <g class="axis" shape-rendering="crispEdges">
          <path class="g" d="M170 167.500H254M214 166L252 335M170 265L187 337M493.500 166L530 329M631.500 166L668 326M774 166L810 323M831 166L866.500 322M1059.500 166L1094 316"/>
          <path class="g" d="M213 167L183 202M486 167L459 198M621 167L597 195M760 167L739 192M816 167L796 190M1039 167L1024 185"/>
          <path class="d" d="M252 335L330 675M170 555L197 675M530 329L609 675M668 326L748 675M866.500 322L948 675M1094 316L1176 675M170 371.500L1366 344.500"/>
          <path class="r" d="M187 337L264 675M810 323L890.500 675M170 338L1366 310.500"/>
          <circle class="g" cx="183" cy="322" r="13"/><circle class="g" cx="183" cy="337" r="13"/><circle class="g" cx="777" cy="179" r="13"/>
        </g>
        <g class="marks"><text x="169" y="173">350</text><text x="179" y="326">3</text><text x="179" y="342">E</text><text x="772" y="184">4</text></g>
        <g shape-rendering="crispEdges">
          <path fill="#e4e4e4" d="M416 386L1103 404 422.500 419z"/>
          <path fill="#999" d="M416 386l6.500 33L391 483l-7-32z"/>
          <path fill="#00e600" d="M422.500 419L1103 404l9 42L433 461z"/>
          <path fill="#009900" d="M422.500 419L433 461 401 525 391 483z"/>
          <path fill="#0073e6" d="M433 461L1112 446 440 495z"/>
          <path fill="#004d99" d="M433 461l7 34L408 559l-7-34z"/>
          <path fill="#0059b3" d="M440 495L1112 446 1081 511 408 559z"/>
        </g>
        <g class="orbit">
          <circle cx="767.500" cy="420.500" r="226"/><circle cx="767.500" cy="194.500" r="14"/><circle cx="767.500" cy="646.500" r="14"/><circle cx="541.500" cy="420.500" r="14"/><circle cx="993.500" cy="420.500" r="14"/>
        </g>
        <g class="ucs">
          <path d="M225 625L218 594" stroke="#0f0" stroke-width="4"/><path d="M215.500 583l6.500 9-8 3z" fill="#0f0"/>
          <path d="M225 625h35" stroke="#f00" stroke-width="4"/><path d="M271 624l-10-4v8z" fill="#f00"/>
          <path d="M225 625l9-19" stroke="#0080ff" stroke-width="4"/><path d="M238 599l1 6-4 4-5-4z" fill="#0080ff"/>
          <text x="226" y="593" fill="#0f0">Y</text><text x="225" y="603" fill="#0080ff">Z</text><text x="258" y="615" fill="#b00000">X</text>
        </g>
      </svg>
    </div>

    <div class="snap"><div class="band">
      <i class="dots"></i>
      <button><svg class="ic"><use href="#ortho"/></svg>正交</button>
      <button class="on"><svg class="ic"><use href="#osnap"/></svg>对象捕捉</button>
      <button><svg class="ic"><use href="#dynin"/></svg>动态输入</button>
    </div><div class="band">
      <i class="dots"></i>
      <button><svg class="ic"><use href="#cross"/></svg>交点</button>
      <button class="on"><svg class="ic"><use href="#perp"/></svg>垂点</button>
      <button class="on"><svg class="ic"><use href="#mid"/></svg>中点</button>
      <button><svg class="ic"><use href="#vertex"/></svg>顶点</button>
      <button><svg class="ic"><use href="#coord"/></svg>坐标</button>
    </div><div class="band fields">
      <i class="dots"></i>
      <select class="short" aria-label="偏移方式"><option>不偏移</option></select>
      <i class="sep"></i>
      <label for="offX">X=</label><span class="spin"><input id="offX" value="0"><i></i></span><span class="unit">mm</span>
      <label for="offY">Y=</label><span class="spin"><input id="offY" value="0"><i></i></span><span class="unit">mm</span>
      <i class="sep"></i>
      <input type="checkbox" id="rotOn"><label class="dark" for="rotOn">旋转</label>
      <span class="spin wide"><input id="rotVal" aria-label="旋转角度" value="0.000"><i></i></span><span class="unit">°</span>
    </div></div>
  </section>
</main>

<footer class="status">
  <span>X=12222 Y=14121</span><span><u>层高</u>:2.8m</span><span><u>底标高</u>:17.55m</span><span>1(1)</span><span></span><span>770 FPS</span>
</footer>

<div class="taskbar">
  <button class="start" aria-label="开始"><svg class="ic"><use href="#win"/></svg></button>
  <div class="search">
    <i class="ring"></i>
    <input type="text" aria-label="搜索" placeholder="在这里输入你要搜索的内容">
    <svg viewBox="0 0 12 18"><rect x="3.500" y=".5" width="5" height="11" rx="1" fill="none" stroke="#999"/><path d="M.5 8v5.500h11V8M6 14v3.500M3 17.500h6" fill="none" stroke="#999"/></svg>
  </div>
  <div class="apps">
    <button aria-label="任务视图"><svg viewBox="0 0 24 24"><path d="M6.500 5.500h11v13h-11zM4 7.500H2.500v9H4M20 7.500h1.500v9H20" fill="none" stroke="#fff"/></svg></button>
    <button class="w51" aria-label="四叶草"><svg viewBox="0 0 24 24"><g fill="#e8e8e8" stroke="#0a1416"><path d="M12 12C8 14 1 12 1.500 6S8 1 11 2s3 6 1 10z"/><path d="M12 12c-2-4-1-10 5-10.500s6 5.500 5 8.500-6 4-10 2z"/><path d="M12 12c4-2 10-1 10.500 5s-5.500 6-8.500 5-4-6-2-10z"/><path d="M12 12c2 4 1 10-5 10.500S1 17 2 14s6-4 10-2z"/></g></svg></button>
    <button class="w51 pale" aria-label="浏览器"><svg viewBox="0 0 24 24"><use href="#ie"/><path d="M21 5c1-4-4-4-10 0C4 10 0 18 3 21c1 1 3 1 5 0" fill="none" stroke="#e8e8e8" stroke-width="1.600"/></svg></button>
    <button class="w51 pale" aria-label="广联达"><svg class="sm"><use href="#swirl"/></svg></button>
    <button class="w51" aria-label="Edge"><svg viewBox="0 0 24 24"><path d="M2 11C4 0 21-1 22 12v2H9c0 6 8 6 12 3v4C14 25 3 22 5 13c1-3 3-4 5-5-1 1-1 2-1 3h7C17 4 6 4 2 11z" fill="#0a78d6"/></svg></button>
    <button class="w51 iex" aria-label="Internet Explorer"><svg viewBox="0 0 24 24"><use href="#ie"/><path d="M22 6c2-6-5-5-11 0C4 11-1 19 2 22c1 1 4 0 6-1" fill="none" stroke="#f4c430" stroke-width="2"/></svg></button>
    <button aria-label="文件资源管理器"><svg viewBox="0 0 24 24"><path d="M1 3h8l1 2h13v16H1z" fill="#fbdc82"/><path d="M1 3h8v2H1z" fill="#e8b73c"/><path d="M5 13h14v8h-4v-4H9v4H5z" fill="#34aee8"/></svg></button>
    <button class="run" aria-label="360浏览器"><svg viewBox="0 0 24 24" color="#fff"><circle cx="12" cy="12" r="10.500" fill="#4cc21f" stroke="#c9f0b4"/><svg x="4" y="4" width="16" height="16"><use href="#ie"/></svg><path d="M21 3C17 2 5 9 4 20" fill="none" stroke="#fff" stroke-width="1.500"/></svg></button>
    <button class="run" aria-label="广联达云"><svg viewBox="0 0 24 24"><path d="M23 2c-1 3-3 4-6 4-4-1-8 2-8 7s6 6 8 3c1-3-1-5-4-3 2-5 9-4 9 2s-5 9-11 8C4 22 1 17 2 11S9 0 16 2c3 1 5 1 7 0z" fill="#1b9bf0"/></svg></button>
    <button class="run cur" aria-label="GGJ2013"><svg><use href="#app"/></svg></button>
    <button class="run" aria-label="记事本"><svg viewBox="0 0 24 24"><rect x="0" y="0" width="24" height="24" rx="3" fill="#f09a1c"/><path d="M4 4l14-1 2 16-14 2z" fill="#fff8dc" stroke="#b5660c"/><path d="M7 8l7-1M7 11l7-1M8 14l5-1" stroke="#86602c"/><path d="M22 2L11 17l-1 3 3-2L23 4z" fill="#8c3c10"/></svg></button>
  </div>
  <div class="tray">
    <span class="link">链接</span>
    <span class="cpu">51%<br>CPU使用</span>
    <svg class="t12" viewBox="0 0 12 12"><path d="M0 9l6-6 6 6" fill="none" stroke="#fff" stroke-width="1.300"/></svg>
    <svg class="t16" viewBox="0 0 16 16"><path d="M4.500 4.500h10v7h-7M15 6.500v3" fill="none" stroke="#fff"/><path d="M7 6h6v4H7z" fill="#fff"/><path d="M1 3v3M4 3v3M0 6.500h5v2L3 10v3" fill="none" stroke="#fff"/></svg>
    <svg class="t16" viewBox="0 0 16 16"><path d="M2 14C2 7 7 3 13 3M5 14c0-5 4-8 8-8M8 14c0-3 3-5 5-5" fill="none" stroke="#ddd" stroke-width="1.400"/><circle cx="12" cy="13" r="1.500" fill="#fff"/></svg>
    <svg class="t16" viewBox="0 0 16 16"><path d="M.5 5.500H3l3-3v11l-3-3H.5z" fill="none" stroke="#fff"/><path d="M8 5.500c1.500 2 1.500 3 0 5M10.500 4c2 3 2 5 0 8M13 2c3 4 3 8 0 12" fill="none" stroke="#fff"/></svg>
    <svg class="t24" viewBox="0 0 24 14"><path d="M.5.500h22v12H.5z" fill="none" stroke="#fff"/><path d="M3 3.500h17M3 6.500h17" stroke="#fff" stroke-dasharray="1 1"/><path d="M5 9.500h13" stroke="#fff"/></svg>
    <span class="cap">A</span>
    <svg class="t16"><use href="#sogou"/></svg>
    <span class="clock">19:12<br>2018/4/23</span>
    <span class="notify"><svg viewBox="0 0 18 16"><path d="M1 1h16v11H8l-4 3v-3H1z" fill="#fff"/><path d="M4 4.500h10M4 7.500h10" stroke="#000"/></svg><em>1</em></span>
    <i class="desk"></i>
  </div>
</div>
</body>
</html>
```
FILE: styles.css
```css
*{box-sizing:border-box}
body{margin:0;min-height:100vh;display:flex;flex-direction:column;background:#f0f0f0;color:#000;font:12px/16px "Noto Sans","Noto Sans CJK SC",sans-serif;white-space:nowrap;overflow:hidden}
h1,h2,ul{margin:0;padding:0;font-size:12px;font-weight:normal}
ul{list-style:none}
i,em{font-style:normal}
u{text-decoration:none}
a{color:inherit;text-decoration:none}
button{display:flex;align-items:center;gap:3px;height:24px;padding:0 3px;border:1px solid transparent;background:none;color:inherit;font:inherit}
button:disabled{color:#8a8a8a}
svg{display:block;flex:none}
.defs{position:absolute;width:0;height:0}
.ic{width:16px;height:16px}
.ic14{width:14px;height:14px}
.ic10{width:10px;height:10px}

/* title bar */
.title{display:flex;align-items:center;gap:5px;height:23px;padding-left:2px;background:#fff}
.title h1{flex:1;min-width:0;overflow:hidden;font-family:Inter,"Noto Sans CJK SC",sans-serif}
.win-btns{display:flex}
.win-btns button{width:46px;height:20px;justify-content:center}
.ball{position:absolute;left:1042px;top:-28px;width:46px;height:46px;border:2px solid #e4e4e4;border-radius:50%;background:#3cc45c;box-shadow:0 1px 4px #777;color:#fff;font-weight:bold;line-height:14px;text-align:center;padding-top:27px}
.ime{position:absolute;left:702px;top:3px;width:206px;height:24px;display:flex;align-items:center;gap:6px;padding-left:32px;border:1px solid #b4c6dc;background:#fff}
.ime svg{width:16px;height:16px}
.ime .ime-logo{position:absolute;left:-1px;top:-4px;width:27px;height:27px}

/* menu bar */
.menubar{display:flex;align-items:center;height:30px}
.menus{display:flex;gap:11px;padding:0 3px 0 7px;flex:none}
.band{display:flex;align-items:center;height:26px;background:linear-gradient(#fcfcfc,#f0f0f0);border-radius:3px}
.notice{flex:none;margin-left:3px;width:188px;justify-content:center;color:#2e6800}
.account{flex:1;margin-left:2px;gap:4px}
.more{margin-left:auto;padding:0 7px 10px 0;font-size:16px}
.arr{border:3px solid transparent;border-top-color:#000;border-bottom:0}
.arr.far{margin-left:3px}

/* tool bars */
.toolrow{display:flex;align-items:center;gap:2px;height:31px}
.toolrow .band{height:28px}
.toolrow .more{padding-bottom:14px}
.file{width:149px;padding-left:1px}
.file button{padding:0 3px}
.calc{width:552px;padding-left:2px}
.view{flex:1;padding-left:1px}
.white{background:#fff}
.on{border-color:#0078d7;background:#e0edf8}
.sep{width:1px;height:14px;margin-left:4px;background:#b0b0b0}
.sep.tall{height:24px;margin-left:1px;background:#888}
.dots{width:2px;height:14px;margin:0 2px 0 4px;background:repeating-linear-gradient(#b8b8b8 0 2px,transparent 2px 4px)}
select{appearance:none;width:69px;height:24px;margin-right:3px;padding:0 2px;border:0;border-radius:0;color:#000;font:inherit;background:linear-gradient(225deg,#000 50%,transparent 50%) right 6px center/3px 3px no-repeat,linear-gradient(135deg,#000 50%,transparent 50%) right 3px center/3px 3px no-repeat,linear-gradient(90deg,#fff 0 84%,#f4f4f4 84%)}
select.short{width:57px}

/* work area */
.work{flex:1;display:grid;grid-template-columns:165px 1fr;gap:5px;min-height:0}
.side{display:flex;flex-direction:column;padding-bottom:2px;background:#f0f0f0}
.side-head{display:flex;align-items:center;gap:8px;height:15px;margin-bottom:1px;padding-right:4px;background:#0054e3;color:#fff}
.side-head h2{flex:1;font-size:13px}
.side-btn{justify-content:center;height:21px;margin:1px 1px 0 0;border:1px solid #a0a0a0;border-top-color:#fff;border-left-color:#aaa}
.side-tools{height:27px;margin-top:2px;padding:5px 0 0 6px;border:1px solid #999;border-width:1px 1px 0;background:linear-gradient(#fafafa,#ececec)}
.side-tools svg{width:40px;height:16px}
.treebox{flex:1;display:flex;flex-direction:column;min-height:0;margin:0 1px 0 2px;border:1px solid #82878f;background:#fff}
.treeview{flex:1;display:flex;min-height:0;overflow:hidden}
.tree{flex:1;width:0;height:467px;overflow:hidden}
.tree>li{margin-left:12px;border-left:1px dotted #888}
.tree ul{margin-left:18px;border-left:1px dotted #888}
.tree ul li{display:flex;align-items:center;height:16px}
.tree ul li::before{content:"";width:10px;border-top:1px dotted #888}
.tree a,.folder{display:flex;align-items:center;height:16px}
.tree .ic{margin-right:4px}
.tree b{font:10px/16px "Liberation Mono",monospace}
.tree .sel{background:#d9d9d9;padding-right:3px}
.tree .ic14{margin-left:1px}
.folder{margin-left:-6px}
.folder em{margin-left:2px;padding:0 2px;background:#ffd800;font-weight:bold;font-size:10px}
.chev{width:10px;height:16px;margin-right:6px;background:#fff;display:flex;align-items:center;justify-content:center}
.chev::before,.vscroll i::before,.hscroll i::before{content:"";width:6px;height:6px;border:solid #505050;border-width:0 2px 2px 0;transform:rotate(45deg)}
.chev::before{margin-top:-3px}
.vscroll{width:17px;display:flex;flex-direction:column;background:#f0f0f0}
.vscroll i,.hscroll i{display:flex;align-items:center;justify-content:center;height:17px}
.vscroll .up::before{transform:rotate(225deg)}
.vscroll .thumb,.hscroll .thumb{background:#cdcdcd}
.vscroll .thumb{flex:196}
.vscroll .gap1{flex:231}
.vscroll .gap2{flex:8}
.vscroll .thumb::before,.hscroll .thumb::before,.vscroll .gap1::before,.vscroll .gap2::before{display:none}
.hscroll{display:flex;height:17px;padding-right:17px;background:#f0f0f0}
.hscroll i{width:17px}
.hscroll .thumb{flex:1;margin-right:5px}
.hscroll .left::before{transform:rotate(135deg)}
.hscroll .right::before{transform:rotate(-45deg)}
.stage{display:flex;flex-direction:column;min-width:0}
.line{display:flex;height:28px;gap:2px}
.line.last{height:26px}
.stub{width:31px;margin-left:143px;background:linear-gradient(90deg,#f4f4f4,#fff)}
.canvas{flex:1;min-height:0;margin-right:1px;background:#000;border:solid #fff;border-width:0 0 1px;overflow:hidden}
.canvas svg{width:100%;height:100%}
.axis{fill:none}
.g{stroke:#008a00}
.d{stroke:#860000}
.r{stroke:#f00}
.marks{fill:#ccc;font:14px "Liberation Mono",monospace}
.orbit{fill:none;stroke:#fff;stroke-opacity:.5}
.ucs text{font:12px "Liberation Sans",sans-serif}
.snap{display:flex;gap:2px;height:31px;padding:1px 0}
.snap .band{height:28px}
.fields label,.unit{color:#777;margin:0 3px}
.fields .sep{margin:0 0 0 2px}
.fields .dark{color:#000;margin:0 5px 0 8px}
.fields input[type="checkbox"]{appearance:none;width:11px;height:11px;margin:0 0 0 4px;border:1px solid #999;background:#f4f4f4}
.spin{display:flex;align-items:center;width:58px;height:23px;border:1px solid #7a7a7a}
.spin.wide{width:68px}
.spin input{flex:1;min-width:0;padding:0 10px 0 0;border:0;background:none;color:#808080;font:inherit;text-align:right}
.spin i{width:6px;height:14px;margin-right:4px;display:flex;flex-direction:column;justify-content:space-between}
.spin i::before,.spin i::after{content:"";border:3px solid transparent;border-bottom-color:#555;border-top:0}
.spin i::after{border-top:3px solid #555;border-bottom:0}
.fields .unit{margin:0 1px}

/* status bar */
.status{display:grid;grid-template-columns:148px 78px 98px 48px 1fr 70px;gap:2px;height:22px;border-top:1px solid #fff;font:10px/19px "Liberation Mono","Noto Sans CJK SC",monospace}
.status span{padding-left:1px;border:1px solid #d4d4d4;border-left:0;background:linear-gradient(#f4f4f4,#fbfbfb)}
.status u{font-size:12px}

/* taskbar */
.taskbar{display:flex;height:40px;background:#020d10;color:#fff}
.taskbar button{height:40px;justify-content:center;padding:0;border:0}
.start{width:48px;background:#000}
.search{display:flex;align-items:center;width:344px;padding:0 14px 0 9px;background:#333}
.ring{width:21px;height:21px;border:3px solid #fff;border-radius:50%}
.search input{flex:1;min-width:0;padding:0 6px;border:0;background:none;color:#fff;font:14px "Noto Sans","Noto Sans CJK SC",sans-serif}
.search input::placeholder{color:#999;opacity:1}
.search svg{width:12px;height:18px}
.apps{display:flex;flex:none}
.apps button{width:48px}
.apps .w51{width:51px}
.apps svg{width:24px;height:24px}
.apps svg.sm{width:20px;height:20px}
.pale{color:#e8e8e8}
.iex{color:#3fa4ec}
.apps .run{background:linear-gradient(#76b9ed,#76b9ed) center bottom/40px 2px no-repeat}
.apps .cur{background:linear-gradient(#76b9ed,#76b9ed) center bottom/48px 2px no-repeat #333c3f}
.tray{flex:1;display:flex;align-items:center;text-align:center;line-height:18px}
.link{margin-left:14px}
.cpu{width:58px;margin-left:14px}
.t12{width:12px;height:12px;margin-left:15px}
.t16{width:16px;height:16px;margin-left:9px}
.t24{width:24px;height:14px;margin-left:8px}
.cap{margin:0 5px 0 9px;font-size:18px}
.clock{width:76px;margin-left:8px}
.notify{position:relative;margin-left:12px}
.notify svg{width:18px;height:16px}
.notify em{position:absolute;left:9px;top:6px;width:16px;height:16px;border:1px solid #888;border-radius:50%;background:#222;font-size:11px;line-height:14px}
.desk{width:1px;height:40px;margin-left:auto;margin-right:4px;background:#555}
```
